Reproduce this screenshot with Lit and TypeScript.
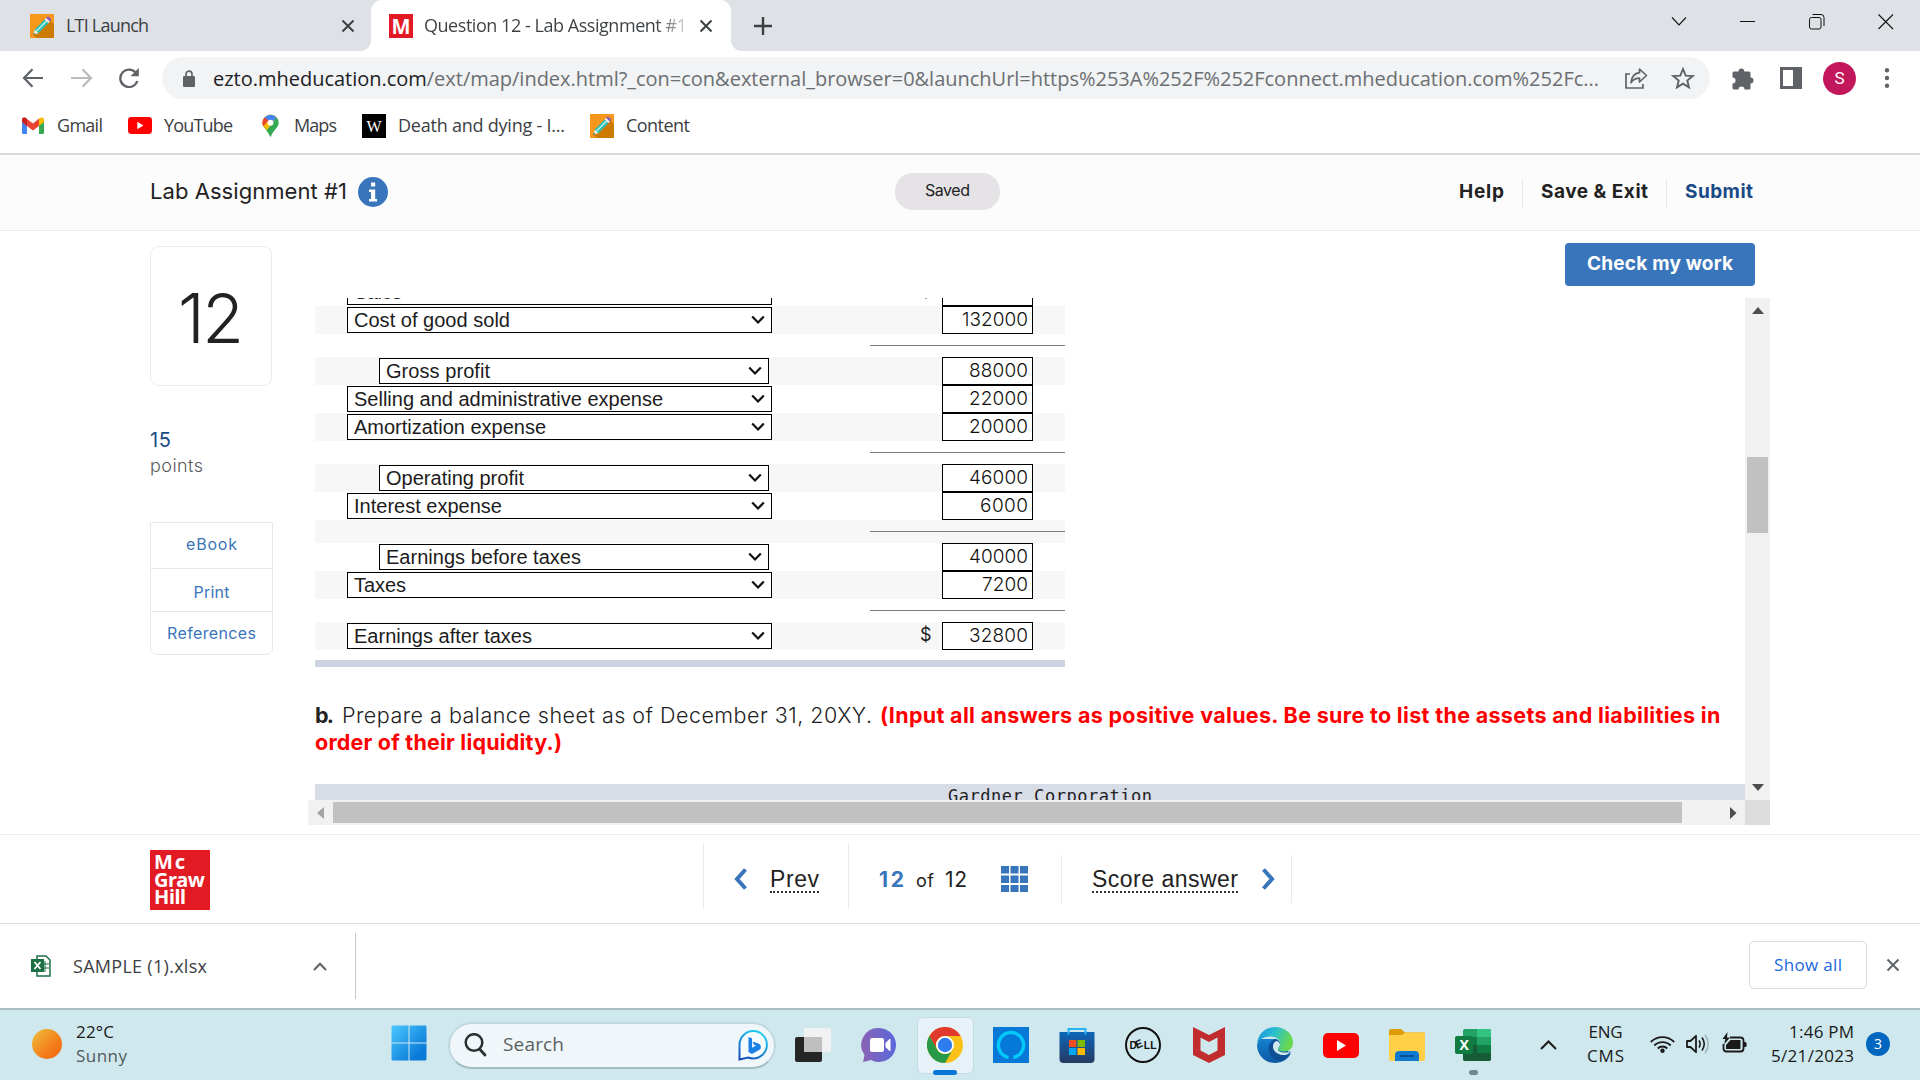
import { LitElement, html, css, svg, nothing } from "lit";
import { customElement, property } from "lit/decorators.js";

/** A single line of text whose tracking is computed so that it spans a given width. */
@customElement("fit-text")
class FitText extends LitElement {
  @property({ type: Number }) w = 0;
  static styles = css`
    :host { display: inline-block; white-space: pre; flex: none; }
  `;
  firstUpdated() {
    const span = this.renderRoot.querySelector("span") as HTMLElement;
    const n = (this.textContent ?? "").length;
    const natural = span.getBoundingClientRect().width;
    const track = n > 1 ? (this.w - natural) / (n - 1) : 0;
    this.style.letterSpacing = `${track.toFixed(3)}px`;
    this.style.width = `${this.w}px`;
  }
  render() {
    return html`<span><slot></slot></span>`;
  }
}

const t = (text: unknown, w: number, cls = "") =>
  html`<fit-text class=${cls} .w=${w}>${text}</fit-text>`;

const pencil = html`<svg class="ic" width="24" height="24" viewBox="0 0 24 24">
  <rect width="24" height="24" fill="#f7981d"/>
  <path d="M20.500 6.500L24 10v14H7l-4-3z" fill="#cc7a00"/>
  <path d="M3.300 20.700l1.300-5L14.800 5.200l4 3.600L8.400 19.200z" fill="#2fc0b4"/>
  <path d="M6.300 17.300L16.700 6.900" stroke="#d9fff8" stroke-width="1.100"/>
  <path d="M16 4l1-1q1-.9 2.200.2l1.500 1.400q1.100 1.100.1 2.200l-1 1z" fill="#8e5bb5"/>
  <path d="M14.600 5.400L16 4l3.900 3.700-1.300 1.400z" fill="#f3eaf8"/>
  <path d="M3.300 20.700l1.300-5 3.800 3.500z" fill="#ffe9cf"/><path d="M3.300 20.700l.6-2 1.400 1.300z" fill="#444"/>
</svg>`;
const cross = (s: number, w: number, c: string) => html`<svg class="ic" width=${s} height=${s} viewBox="0 0 14 14">
  <path d="M1.500 1.500l11 11M12.500 1.500l-11 11" stroke=${c} stroke-width=${w} fill="none"/></svg>`;
const caret = html`<svg class="ic" width="14" height="10" viewBox="0 0 14 10"><path d="M1.200 1.500L7 7.500l5.800-6" fill="none" stroke="#111" stroke-width="2.200"/></svg>`;
const tube = (w: number, h: number) => html`<svg class="ic" width=${w} height=${h} viewBox="0 0 36 25" preserveAspectRatio="none">
  <rect width="36" height="25" rx="5" fill="#f00"/><path d="M14 7l9 5.500-9 5.500z" fill="#fff"/></svg>`;

interface Row { label?: string; lw?: number; value?: string; vw?: number; indent?: boolean; dollar?: boolean; }
const rows: Row[] = [
  { label: "Sales", lw: 48, value: "220000", vw: 66, dollar: true },
  { label: "Cost of good sold", lw: 156, value: "132000", vw: 66 },
  {},
  { label: "Gross profit", lw: 104, value: "88000", vw: 59, indent: true },
  { label: "Selling and administrative expense", lw: 309, value: "22000", vw: 59 },
  { label: "Amortization expense", lw: 192, value: "20000", vw: 59 },
  {},
  { label: "Operating profit", lw: 138, value: "46000", vw: 59, indent: true },
  { label: "Interest expense", lw: 148, value: "6000", vw: 48 },
  {},
  { label: "Earnings before taxes", lw: 195, value: "40000", vw: 59, indent: true },
  { label: "Taxes", lw: 52, value: "7200", vw: 46 },
  {},
  { label: "Earnings after taxes", lw: 178, value: "32800", vw: 59, dollar: true },
];

@customElement("income-table")
class IncomeTable extends LitElement {
  static styles = css`
    :host { display: block; width: 750px; font: 20px/26px "Liberation Sans", Arial, sans-serif; color: #1c1c1c; }
    .row { height: 28px; display: grid; grid-template-columns: 32px 595px 91px; align-items: center; background: #fff; }
    .row:nth-child(even) { background: #f7f7f7; }
    .blank { height: 23px; display: flex; justify-content: flex-end; align-items: center; background: #fff; }
    .blank:nth-child(even) { background: #f7f7f7; }
    .rule { width: 195px; height: 1px; background: #7c7c7c; }
    .mid { grid-column: 2; display: flex; align-items: center; }
    .sel { box-sizing: border-box; width: 425px; height: 26px; border: 1px solid #000; background: #fff;
      display: flex; align-items: center; justify-content: space-between; padding: 0 6px; line-height: 24px; }
    .indent .sel { width: 390px; margin-left: 32px; }
    .usd { margin: -2px 0 0 148px; font: 400 18px/26px Inter, sans-serif; }
    .val { box-sizing: border-box; height: 28px; border: 1px solid #000; background: #fff; display: flex;
      justify-content: flex-end; padding: 1px 4px 0 0; font: 300 19px/24px Inter, sans-serif; color: #111; }
    .row:first-child .val { padding-top: 0; }
    .end { width: 750px; height: 7px; margin-top: 10px; background: #cdd3e0; }
  `;
  render() {
    return html`<div>${rows.map((r) => r.label
      ? html`<div class="row ${r.indent ? "indent" : ""}">
          <div class="mid"><div class="sel">${t(r.label, r.lw!)}${caret}</div>
          ${r.dollar ? html`<span class="usd">$</span>` : nothing}</div>
          <div class="val">${t(r.value, r.vw!)}</div></div>`
      : html`<div class="blank"><div class="rule"></div></div>`)}</div>
      <div class="end"></div>`;
  }
}

const winLogo = html`<svg width="36" height="36" viewBox="0 0 36 36"><defs><linearGradient id="wg" gradientUnits="userSpaceOnUse" x1="0" y1="0" x2="36" y2="36"><stop offset="0" stop-color="#4ccaff"/><stop offset=".8" stop-color="#0a7ad8"/></linearGradient></defs>
  <path d="M1.500.5H17.500v17H.5v-16zM18.500.5h16l1 1v16h-17zM.5 18.500h17v17h-16l-1-1zM18.500 18.500h17v16l-1 1h-16z" fill="url(#wg)"/></svg>`;

const apps = [
  html`<svg width="36" height="36" viewBox="0 0 36 36"><rect x="0" y="10" width="27" height="25" rx="2" fill="#262626"/><rect x="9" y="1" width="27" height="24" rx="2" fill="#f1f1f1" opacity=".96"/><rect x="9" y="10" width="18" height="15" fill="#bfbfbf"/></svg>`,
  html`<svg width="36" height="36" viewBox="0 0 36 36"><defs><linearGradient id="cg" x1="0" x2="1"><stop offset="0" stop-color="#8a62b4"/><stop offset="1" stop-color="#5a68dc"/></linearGradient></defs><path d="M18 1a17 17 0 11-8 32L2 35l1.500-7A17 17 0 0118 1z" fill="url(#cg)"/><rect x="9" y="11" width="14" height="14" rx="2" fill="#fff"/><path d="M24.500 16l4-4q1-.5 1 .5v11q0 1-1 .5l-4-4z" fill="#fff"/></svg>`,
  html`<svg width="36" height="36" viewBox="0 0 36 36"><circle cx="18" cy="18" r="18" fill="#fbc116"/><path d="M2.400 9A18 18 0 0133.600 9H18a9 9 0 00-7.800 13.500z" fill="#e03a2e"/><path d="M2.400 9A18 18 0 0018 36l7.800-13.500a9 9 0 01-15.600 0z" fill="#269a48"/><circle cx="18" cy="18" r="9" fill="#fff"/><circle cx="18" cy="18" r="7.200" fill="#2f7ded"/></svg>`,
  html`<svg width="36" height="36" viewBox="0 0 36 36"><rect width="36" height="36" fill="#0578d8"/><path d="M15.500 30.500a12.600 12.600 0 115 0" fill="none" stroke="#05c8fb" stroke-width="3.400"/></svg>`,
  html`<svg width="36" height="36" viewBox="0 0 36 36"><defs><linearGradient id="sg" x1="0" y1="0" x2="0" y2="1"><stop offset="0" stop-color="#0d66b8"/><stop offset="1" stop-color="#263a63"/></linearGradient></defs><path d="M.5 5h35v27q0 4-4 4h-27q-4 0-4-4z" fill="url(#sg)"/><path d="M9.500 7.500V2h17v5.500" fill="none" stroke="#25b5f3" stroke-width="2"/><path d="M10 13h7.300v7H10z" fill="#f25022"/><path d="M18.500 13H26v7h-7.500z" fill="#7fba00"/><path d="M10 21h7.300v7H10z" fill="#00a4ef"/><path d="M18.500 21H26v7h-7.500z" fill="#ffb900"/></svg>`,
  html`<svg width="36" height="36" viewBox="0 0 36 36"><circle cx="18" cy="18" r="17" fill="none" stroke="#111" stroke-width="2"/><text x="4.500" y="22" font-family="Liberation Sans, sans-serif" font-weight="700" font-size="11.500" textLength="27" lengthAdjust="spacingAndGlyphs" rotate="0 -22 0 0" fill="#111">DELL</text></svg>`,
  html`<svg width="36" height="36" viewBox="0 0 36 36"><path d="M2 0l16 8 16-8v28l-16 8-16-8zM9.500 10.500v13L18 28l8.500-4.500v-13L18 15z" fill="#c12d2e" fill-rule="evenodd"/></svg>`,
  html`<svg width="36" height="36" viewBox="0 0 36 36"><defs><linearGradient id="eg" x1="0" y1="0" x2="1" y2=".3"><stop offset="0" stop-color="#1d8fdd"/><stop offset=".5" stop-color="#2bbfd2"/><stop offset="1" stop-color="#68d84f"/></linearGradient><linearGradient id="eb" x1="0" y1="0" x2="0" y2="1"><stop offset="0" stop-color="#1681cf"/><stop offset="1" stop-color="#0b59a4"/></linearGradient></defs><path d="M0 18C0 28 8 36 18 36c7 0 12.500-3.500 15.500-9L20 12 2 12z" fill="url(#eb)"/><path d="M0 17C1 6 9 0 18 0c10 0 18 7 18 15.500 0 6-4 9-9 9-4 0-6-1.500-6-3 0-1 2-2 2-5 0-4-4-7-9-7C7 9.500 1 13 0 17z" fill="url(#eg)"/><path d="M11.500 22c0-5 3-8.500 6.500-10q5 1.500 5 5c0 2.500-2 3-2 4.500 0 2.500 4 4.500 9 3.500 1.500-.3 3.500-1.200 3.500.5C32 29 28 33 23 33.500c-6 .5-11.500-5-11.500-11.500z" fill="#0f4f95"/><path d="M16 19.500c0-3 1.500-5 3.500-5.500 2.500.5 3.500 2 3.500 3.500 0 2-2 3-2 4.500 0 2.500 4 4 8.500 3.500 1.500-.2 3-.8 3.500-.3-1.500 2.300-5 3-7.500 2.800-5.500-.5-9.500-4-9.500-8.500z" fill="#cfe8ee"/></svg>`,
  tube(36, 25),
  html`<svg width="36" height="32" viewBox="0 0 36 32"><path d="M0 2q0-2 2-2h10l4 3.500h18q2 0 2 2V12H0z" fill="#dd9b07"/><path d="M0 9V6h13l3-2.500h20V30q0 2-2 2H2q-2 0-2-2z" fill="#ffcf48"/><path d="M6 32v-6q0-4 4-4h16q4 0 4 4v6z" fill="#0f78d1"/><rect x="11" y="26" width="14" height="2" fill="#0a4e94"/></svg>`,
  html`<svg width="36" height="32" viewBox="0 0 36 32"><rect x="8" width="28" height="32" rx="2" fill="#21a366"/><path d="M22 0h12q2 0 2 2v6H22z" fill="#33c481"/><path d="M8 8h14v8H8zM22 16h14v8H22z" fill="#107c41"/><path d="M8 16h14v8H8z" fill="#185c37"/><path d="M8 24h28v6q0 2-2 2H10q-2 0-2-2z" fill="#185c37"/><rect y="7" width="18" height="18" rx="2" fill="#107c41"/><text x="4.400" y="21" font-family="Open Sans, sans-serif" font-weight="700" font-size="14" fill="#fff">X</text></svg>`,
];

@customElement("app-root")
class AppRoot extends LitElement {
  static styles = css`
    :host { display: block; width: 1920px; height: 1080px; overflow: hidden; background: #fff;
      font-family: "Open Sans", "Noto Sans", sans-serif; font-size: 18px; color: #3c4043; }
    * { box-sizing: border-box; }
    b { font-weight: 700; }
    .ic { flex: none; display: block; }
    .bar { display: flex; align-items: center; }

    .tabs { height: 51px; background: #dee1e6; align-items: stretch; }
    .tab { display: flex; align-items: center; height: 51px; font-size: 18px; }
    .tab fit-text { padding-bottom: 1px; }
    .tab1 { width: 371px; padding-left: 30px; }
    .tab1 fit-text { margin: 0 192px 0 12px; }
    .tab2 { width: 360px; background: #fff; border-radius: 11px 11px 0 0; padding-left: 18px; position: relative; }
    .tab2::before, .tab2::after { content: ""; position: absolute; bottom: 0; width: 10px; height: 10px; }
    .tab2::before { left: -10px; background: radial-gradient(circle at 0 0, transparent 9.500px, #fff 10px); }
    .tab2::after { right: -10px; background: radial-gradient(circle at 100% 0, transparent 9.500px, #fff 10px); }
    .tab2 fit-text { margin: 0 12px 0 11px; background: linear-gradient(90deg, #3c4043 88%, #3c404330 100%);
      -webkit-background-clip: text; color: transparent; }
    .plus { margin: 0 899px 0 23px; align-self: center; }
    .win { align-self: flex-start; margin-top: 13px; }
    .win + .win { margin-left: 53px; }

    .tools { height: 54px; }
    .back { margin-left: 22px; } .fwd { margin-left: 27px; } .rel { margin-left: 26px; }
    .omni { margin-left: 23px; width: 1548px; height: 42px; border-radius: 21px; background: #f1f3f4;
      display: flex; align-items: center; padding-left: 21px; font-size: 20px; color: #6b6f73; }
    .host { color: #202124; }
    .omni fit-text { margin: 0 26px 0 18px; }
    .star { margin-left: 23px; }
    .ext { margin-left: 21px; } .panel { margin-left: 25px; }
    .avatar { width: 33px; height: 33px; border-radius: 50%; background: #c2185b; color: #fff; margin-left: 20px;
      display: grid; place-items: center; font: 17px/33px Roboto, sans-serif; }
    .dots { margin-left: 28px; }

    .marks { height: 50px; padding: 0 0 7px 22px; border-bottom: 2px solid #dadbdd; font-size: 18px; }
    .marks fit-text { margin: 0 25px 1px 13px; }
    .marks fit-text + svg + fit-text { margin-left: 12px; }
    .pin { margin: 0 3px 0 4px; }

    .app { font-family: Inter, "Open Sans", sans-serif; color: #222; font-weight: 300; }
    .head { height: 76px; background: #fcfcfc; border-bottom: 1px solid #ededed; padding: 0 0 2px 150px; }
    .title { font-size: 22px; font-weight: 400; margin-right: 11px; padding-bottom: 1px; }
    .saved { margin-left: 507px; width: 105px; height: 37px; border-radius: 18px; background: #e5e3e6;
      display: flex; justify-content: center; font-size: 16px; line-height: 35px; font-weight: 400; }
    .nav { margin-left: 459px; font-weight: 700; font-size: 19px; }
    .nav fit-text { line-height: 28px; padding-top: 1px; }
    .sep { width: 1px; height: 29px; background: #e8e8e8; margin: 2px 18px 0; }
    .submit { color: #1a4a86; }

    .main { display: flex; height: 603px; padding-left: 150px; }
    .side { width: 158px; padding-top: 15px; }
    .num { width: 122px; height: 140px; border: 1px solid #ececec; border-radius: 8px; font-size: 68px; line-height: 141px;
      display: flex; justify-content: center; padding-top: 1px; }
    .pts { margin-top: 41px; font-size: 20px; line-height: 26px; color: #1a4a86; height: 26px; font-weight: 400; }
    .ptl { font-size: 18px; line-height: 25px; color: #5c5c5c; height: 25px; }
    .links { margin-top: 44px; width: 123px; border: 1px solid #e8e8e8; border-radius: 0 0 7px 7px; font-size: 16px; font-weight: 400; color: #3975ba; height: 133px; }
    .link { height: 43px; display: flex; justify-content: center; align-items: center; padding-bottom: 1px; }
    .link:first-child { height: 45px; padding-bottom: 3px; }
    .link:nth-child(2) { padding: 3px 0 0; }
    .link + .link { border-top: 1px solid #e8e8e8; }
    .work { width: 1462px; }
    .act { height: 67px; padding: 12px 15px 0 0; display: flex; justify-content: flex-end; }
    .check { width: 190px; height: 43px; border-radius: 4px; background: #3975ba; color: #fff; font-weight: 700; font-size: 19px;
      line-height: 42px; display: flex; justify-content: center; }
    .scroll { display: grid; grid-template: 502px 25px / 1437px 25px; height: 527px; }
    .pane { overflow: hidden; padding-left: 7px; }
    income-table { margin-top: -20px; }
    .para { margin-top: 35px; font-size: 21.500px; line-height: 27px; height: 82px; }
    .line { display: flex; gap: 8px; height: 27px; }
    .req { color: #f00; font-weight: 700; }
    .corp { height: 32px; background: #d8dce7; font: 17px/24px "DejaVu Sans Mono", monospace; display: flex; padding-left: 633px; }
    .vs { background: #f1f1f1; display: flex; flex-direction: column; align-items: center; padding: 9px 0; }
    .vthumb { width: 21px; height: 76px; background: #c1c1c1; margin: 143px 0 251px; flex: none; }
    .hs { background: #f1f1f1; display: flex; align-items: center; padding-left: 9px; }
    .hthumb { width: 1349px; height: 21px; background: #c1c1c1; margin: 0 48px 0 9px; }
    .corner { background: #dcdcdc; }

    .foot { height: 89px; border-top: 1px solid #eee; padding-left: 150px; font-size: 21px; font-weight: 400; }
    .logo { width: 60px; height: 60px; background: #e21a23; color: #fff; font: 700 20px/17.500px "Noto Sans", sans-serif; padding: 3px 0 0 4px; margin-top: 2px; display: flex; flex-direction: column; }
    .fs { width: 1px; background: #eaeaea; height: 48px; }
    .tall { height: 66px; margin-top: -6px; }
    .dot { font: 23px/23px "Liberation Sans", Arial, sans-serif; border-bottom: 2px dotted #333; padding-top: 2px; }
    .cur { font-weight: 700; color: #3975ba; }
    .of { font-size: 18px; }

    .dl { height: 85px; border-top: 1px solid #d9dadc; padding: 0 0 0 31px; }
    .dls { width: 1px; height: 66px; background: #c8c9cb; margin-left: 28px; }
    .all { width: 118px; height: 48px; border: 1px solid #dadce0; border-radius: 5px; color: #1a67e0; margin-left: 1393px;
      display: flex; justify-content: center; align-items: center; font-size: 17px; font-weight: 500; margin-top: -3px; }

    .task { height: 72px; background: #cfe8ee; border-top: 2px solid #a9bcbf; color: #1a1a1a; }
    .sun { width: 30px; height: 30px; border-radius: 50%; background: linear-gradient(135deg, #ecc03a, #f4801c 60%, #f2640c); margin: -2px 14px 0 32px; }
    .two { display: flex; flex-direction: column; line-height: 24px; font-size: 17px; padding-bottom: 2px; }
    .dim { color: #53595b; }
    .search { width: 328px; height: 47px; border-radius: 24px; background: #f0f7fa; border: 2px solid #bfd7de; border-bottom-color: #a4bcc3;
      margin-left: 21px; display: flex; align-items: center; padding: 0 5px 0 14px; font-size: 19px; color: #5b6062; }
    .search fit-text { margin: 0 174px 2px 16px; }
    .apps { display: flex; margin-left: 4px; height: 57px; }
    .app1 { width: 66px; display: grid; place-items: center; position: relative; height: 57px; }
    .app1 svg { display: block; z-index: 1; }
    .on::before { content: ""; position: absolute; inset: 0 4px 0 5px; background: #e6f2f7; border: 1px solid #c3dce2; border-radius: 6px; }
    .on::after { content: ""; position: absolute; bottom: -1px; left: 21px; width: 24px; height: 5px; border-radius: 3px; background: #0676d7; }
    .run::after { content: ""; position: absolute; bottom: -1px; left: 29px; width: 9px; height: 5px; border-radius: 3px; background: #70878c; }
    .tray { margin-left: 34px; }
    .right { align-items: flex-end; width: 84px; }
    .mid { align-items: center; }
    .badge { width: 24px; height: 24px; border-radius: 50%; background: #0067c0; color: #fff; font-size: 14px; line-height: 23px; text-align: center; margin: -2px 0 0 12px; }
  `;

  render() {
    return html`
      <div class="bar tabs">
        <div class="tab tab1">${pencil}${t("LTI Launch", 83)}${cross(14, 2, "#3c4043")}</div>
        <div class="tab tab2">
          <svg class="ic" width="24" height="24" viewBox="0 0 24 24"><rect width="24" height="24" fill="#e21a23"/><text x="2.500" y="20" font-family="Open Sans, sans-serif" font-weight="700" font-size="22" textLength="19" lengthAdjust="spacingAndGlyphs" fill="#fff">M</text></svg>
          ${t("Question 12 - Lab Assignment #1", 263)}${cross(14, 2, "#3c4043")}
        </div>
        <svg class="ic plus" width="18" height="18" viewBox="0 0 18 18"><path d="M9 0v18M0 9h18" stroke="#3c4043" stroke-width="2.400"/></svg>
        <svg class="ic win" width="16" height="17" viewBox="0 0 16 17"><path d="M1 4.500l7 7.500 7-7.500" fill="none" stroke="#111" stroke-width="1.100"/></svg>
        <svg class="ic win" width="16" height="17" viewBox="0 0 16 17"><path d="M0 8.500h15" stroke="#111"/></svg>
        <svg class="ic win" width="16" height="17" viewBox="0 0 16 17"><rect x=".5" y="4.500" width="11.500" height="11.500" rx="2" fill="none" stroke="#111"/><path d="M3.500 1.500H12q3 0 3 3V13" fill="none" stroke="#111"/></svg>
        <svg class="ic win" width="16" height="17" viewBox="0 0 16 17"><path d="M.5 1.500l14.500 14.500M15 1.500L.5 16" stroke="#111" stroke-width="1.100"/></svg>
      </div>
      <div class="bar tools">
        <svg class="ic back" width="22" height="20" viewBox="0 0 22 20"><path d="M10.500 1.200L2 10l8.500 8.800M2 10h19" fill="none" stroke="#5f6368" stroke-width="2.200"/></svg>
        <svg class="ic fwd" width="22" height="20" viewBox="0 0 22 20"><path d="M11.500 1.200L20 10l-8.500 8.800M20 10H0" fill="none" stroke="#b9bbbe" stroke-width="2.200"/></svg>
        <svg class="ic rel" width="20" height="20" viewBox="0 0 20 20"><path d="M17.300 5.600A8.700 8.700 0 1018.300 13" fill="none" stroke="#5f6368" stroke-width="2.300"/><path d="M19.800 0v8.300h-8.300z" fill="#5f6368"/></svg>
        <div class="omni">
          <svg class="ic" width="12" height="17" viewBox="0 0 12 17"><rect y="6" width="12" height="11" rx="1.300" fill="#5f6368"/><path d="M3 7V4.200a3 3 0 016 0V7" fill="none" stroke="#5f6368" stroke-width="1.700"/></svg>
          ${t(html`<span class="host">ezto.mheducation.com</span>/ext/map/index.html?_con=con&external_browser=0&launchUrl=https%253A%252F%252Fconnect.mheducation.com%252Fc...`, 1386)}
          <svg class="ic" width="23" height="22" viewBox="0 0 23 22"><path d="M5 7H1v14h17v-4" fill="none" stroke="#5f6368" stroke-width="1.700"/><path d="M14.500 2l7 6.500-7 6.500v-3.800c-4 0-6.500 1.500-8.500 4.500.5-5 3-9.200 8.500-10z" fill="none" stroke="#5f6368" stroke-width="1.700" stroke-linejoin="round"/></svg>
          <svg class="ic star" width="24" height="22" viewBox="0 0 24 22"><path d="M12 2l2.700 6.600 7 .5-5.400 4.500 1.700 6.800-6-3.700-6 3.700 1.700-6.800L2.300 9.100l7-.5z" fill="none" stroke="#5f6368" stroke-width="1.900"/></svg>
        </div>
        <svg class="ic ext" width="24" height="23" viewBox="0 0 24 23"><path d="M7.500 4.500a2.900 2.900 0 015.800 0H18q1.500 0 1.500 1.500v4.500a3 3 0 010 6V21q0 1.500-1.500 1.500h-4.500a3 3 0 00-6 0H3q-1.500 0-1.500-1.500v-4.500a3 3 0 000-6V6q0-1.500 1.500-1.500z" fill="#5f6368"/></svg>
        <svg class="ic panel" width="23" height="22" viewBox="0 0 23 22"><path d="M0 0h22v22H0zM3 3v16h10V3z" fill="#5f6368" fill-rule="evenodd"/></svg>
        <div class="avatar">S</div>
        <svg class="ic dots" width="6" height="20" viewBox="0 0 6 20"><g fill="#5f6368"><circle cx="3" cy="2.300" r="2.200"/><circle cx="3" cy="10" r="2.200"/><circle cx="3" cy="17.700" r="2.200"/></g></svg>
      </div>
      <div class="bar marks">
        <svg class="ic" width="22" height="17" viewBox="0 0 22 17"><path d="M0 2.500V15.500Q0 17 1.500 17H5V6z" fill="#4285f4"/><path d="M22 2.500V15.500Q22 17 20.500 17H17V6z" fill="#34a853"/><path d="M17 1.500l2-1q3-.5 3 2V5l-5 4z" fill="#fbbc04"/><path d="M0 5V2.500Q0 0 3 .5L11 6.500l6-5V9l-6 4.500L5 9z" fill="#ea4335"/><path d="M0 5V2.500Q0 0 3 .5l2 1.500v7z" fill="#c5221f"/></svg>
        ${t("Gmail", 46)}${tube(24, 17)}${t("YouTube", 69)}
        <svg class="ic pin" width="17" height="24" viewBox="0 0 18 24"><path d="M9 0a8.600 8.600 0 018.600 8.600C17.600 14 12 16 9 24 6 16 .4 14 .4 8.600z" fill="#34a853"/><path d="M.4 8.600C.4 12 3 14 5 16.500L15.500 3A8.600 8.600 0 00.4 8.600z" fill="#fbbc04"/><path d="M2.500 3A8.600 8.600 0 0115.500 3L9 10.500z" fill="#4285f4"/><path d="M2.500 3A8.600 8.600 0 00.4 8.600q0 2 1 3.600L7 6z" fill="#ea4335"/><circle cx="9" cy="8.600" r="3.100" fill="#fff"/></svg>
        ${t("Maps", 43)}
        <svg class="ic" width="24" height="24" viewBox="0 0 24 24"><rect width="24" height="24"/><text x="12" y="17.500" text-anchor="middle" font-family="Liberation Serif, serif" font-size="16" fill="#fff">W</text></svg>
        ${t("Death and dying - I...", 167)}${pencil}${t("Content", 64)}
      </div>

      <div class="app">
        <div class="bar head">
          ${t("Lab Assignment #1", 197, "title")}
          <svg class="ic" width="30" height="30" viewBox="0 0 30 30"><circle cx="15" cy="15" r="15" fill="#3975ba"/><path d="M13 5.500h4.200v4H13zM11 12.500h6.200V22H19v2.500h-8V22h2v-7h-2z" fill="#fff"/></svg>
          <div class="saved">${t("Saved", 45)}</div>
          <div class="bar nav">${t("Help", 45)}<div class="sep"></div>${t("Save & Exit", 107)}<div class="sep"></div>${t("Submit", 68, "submit")}</div>
        </div>
        <div class="main">
          <div class="side">
            <div class="num">${t("12", 66)}</div>
            <div class="pts">${t("15", 21)}</div>
            <div class="ptl">${t("points", 53)}</div>
            <div class="links">
              <div class="link">${t("eBook", 51)}</div><div class="link">${t("Print", 36)}</div><div class="link">${t("References", 89)}</div>
            </div>
          </div>
          <div class="work">
            <div class="act"><div class="check">${t("Check my work", 146)}</div></div>
            <div class="scroll">
              <div class="pane">
                <income-table></income-table>
                <div class="para">
                  <div class="line">${t(html`<b>b.</b>`, 19)}${t("Prepare a balance sheet as of December 31, 20XY.", 530)}${t("(Input all answers as positive values. Be sure to list the assets and liabilities in", 840, "req")}</div>
                  <div class="line">${t("order of their liquidity.)", 247, "req")}</div>
                </div>
                <div class="corp">${t("Gardner Corporation", 204)}</div>
              </div>
              <div class="vs">
                <svg class="ic" width="12" height="7" viewBox="0 0 12 7"><path d="M0 7l6-7 6 7z" fill="#4d4d4d"/></svg>
                <div class="vthumb"></div>
                <svg class="ic" width="12" height="7" viewBox="0 0 12 7"><path d="M0 0l6 7 6-7z" fill="#4d4d4d"/></svg>
              </div>
              <div class="hs">
                <svg class="ic" width="7" height="12" viewBox="0 0 7 12"><path d="M7 0L0 6l7 6z" fill="#a3a3a3"/></svg>
                <div class="hthumb"></div>
                <svg class="ic" width="7" height="12" viewBox="0 0 7 12"><path d="M0 0l6.500 6L0 12z" fill="#4d4d4d"/></svg>
              </div>
              <div class="corner"></div>
            </div>
          </div>
        </div>
        <div class="bar foot">
          <div class="logo">${t("Mc", 31)}${t("Graw", 51)}${t("Hill", 32)}</div>
          <div class="fs tall" style="margin-left:493px"></div>
          <svg class="ic" style="margin-left:29px" width="15" height="22" viewBox="0 0 15 22"><path d="M12.500 1.500L4 11l8.500 9.500" fill="none" stroke="#3975ba" stroke-width="4"/></svg>
          <div style="margin-left:22px">${t("Prev", 49, "dot")}</div>
          <div class="fs tall" style="margin-left:29px"></div>
          <div style="margin-left:30px">${t("12", 25, "cur")}</div>
          <div style="margin-left:12px">${t("of", 18, "of")}</div>
          <div style="margin-left:11px">${t("12", 22)}</div>
          <svg class="ic" style="margin-left:34px" width="27" height="26" viewBox="0 0 27 26">${[0, 1, 2].map((r) => [0, 1, 2].map((c) => svg`<rect x=${c * 9.5} y=${r * 9.500} width="8" height="7.500" fill="#3975ba"/>`))}</svg>
          <div class="fs" style="margin-left:33px"></div>
          <div style="margin-left:30px">${t("Score answer", 146, "dot")}</div>
          <svg class="ic" style="margin-left:23px" width="15" height="22" viewBox="0 0 15 22"><path d="M2.500 1.500L11 11l-8.500 9.500" fill="none" stroke="#3975ba" stroke-width="4"/></svg>
          <div class="fs" style="margin-left:15px"></div>
        </div>
      </div>

      <div class="bar dl">
        <svg class="ic" width="20" height="22" viewBox="0 0 20 22"><path d="M6 1h9l4 4v16H6z" fill="#fff" stroke="#1d7044" stroke-width="1.500"/><path d="M14 6v11M10 9h8M10 13h8" stroke="#1d7044"/><rect y="4" width="13" height="13" fill="#1d7044"/><path d="M3.500 7l6 7M9.500 7l-6 7" stroke="#fff" stroke-width="1.800"/></svg>
        <div style="margin-left:22px">${t("SAMPLE (1).xlsx", 134)}</div>
        <svg class="ic" style="margin-left:106px" width="14" height="9" viewBox="0 0 14 9"><path d="M1 8l6-6.300L13 8" fill="none" stroke="#5f6368" stroke-width="2"/></svg>
        <div class="dls"></div>
        <div class="all">${t("Show all", 68)}</div>
        <div style="margin:-2px 0 0 19px">${cross(14, 2, "#5f6368")}</div>
      </div>

      <div class="bar task">
        <div class="sun"></div>
        <div class="two">${t("22°C", 38)}${t("Sunny", 51, "dim")}</div>
        <div style="margin-left:264px">${winLogo}</div>
        <div class="search">
          <svg class="ic" width="23" height="24" viewBox="0 0 23 24"><circle cx="10" cy="9.500" r="8.300" fill="none" stroke="#2c3032" stroke-width="2.500"/><path d="M15.500 16l5.500 6" stroke="#2c3032" stroke-width="2.800" stroke-linecap="round"/></svg>
          ${t("Search", 61)}
          <svg class="ic" width="30" height="31" viewBox="0 0 30 31"><defs><linearGradient id="bg" x1="0" y1="1" x2=".5" y2="0"><stop offset="0" stop-color="#1747b5"/><stop offset="1" stop-color="#20c8f0"/></linearGradient></defs><path d="M1.500 29.500V15A13.700 13.700 0 1115 28.500q-3-.2-5-1z" fill="#f5fbff" stroke="url(#bg)" stroke-width="2"/><path d="M10.500 7l3.500 1.300v9.500l4-2.200-2.200-1-1.400-3.200 6.500 2.400q2 1 2 3.200 0 2-1.800 3.100L14 24l-3.500-2z" fill="#1a7fe6"/></svg>
        </div>
        <div class="apps">${apps.map((a, i) => html`<div class="app1 ${i === 2 ? "on" : i === 10 ? "run" : ""}">${a}</div>`)}</div>
        <svg class="ic tray" width="17" height="10" viewBox="0 0 17 10"><path d="M1 9l7.500-7.500L16 9" fill="none" stroke="#1a1a1a" stroke-width="2"/></svg>
        <div class="two mid" style="margin-left:30px">${t("ENG", 34)}${t("CMS", 37)}</div>
        <svg class="ic" style="margin:-2px 0 0 26px" width="25" height="18" viewBox="0 0 25 18"><g fill="none" stroke="#1a1a1a" stroke-width="1.800"><path d="M.8 7a16.500 16.500 0 0123.400 0M4.300 10.500a11.600 11.600 0 0116.400 0M7.700 13.500a6.800 6.800 0 019.600 0"/></g><circle cx="12.500" cy="15.700" r="2.200" fill="#1a1a1a"/></svg>
        <svg class="ic" style="margin:-2px 0 0 11px" width="25" height="20" viewBox="0 0 25 20"><path d="M1 7h3.500L10 1.800v16.400L4.500 13H1z" fill="none" stroke="#1a1a1a" stroke-width="1.800" stroke-linejoin="round"/><path d="M13 6.500q2.300 3.500 0 7M16 3.500q4.500 6.500 0 13" fill="none" stroke="#1a1a1a" stroke-width="1.600"/><path d="M19 .8q6.500 9.200 0 18.400" fill="none" stroke="#9fb3b8" stroke-width="1.500"/></svg>
        <svg class="ic" style="margin:-5px 0 0 11px" width="25" height="22" viewBox="0 0 25 22"><path d="M8 5.500h10.500q3 0 3 3v8q0 3-3 3h-14q-3 0-3-3V12" fill="none" stroke="#1a1a1a" stroke-width="1.800"/><path d="M8.500 8h10v9H4v-4z" fill="#1a1a1a"/><path d="M22 10h1.500q1.200 0 1.200 2.500t-1.200 2.500H22zM5.500 0L.5 7h2.800L2 12.500 8 5.500H5z" fill="#1a1a1a"/></svg>
        <div class="two right" style="margin-left:23px">${t("1:46 PM", 65)}${t("5/21/2023", 83)}</div>
        <div class="badge">3</div>
      </div>`;
  }
}
